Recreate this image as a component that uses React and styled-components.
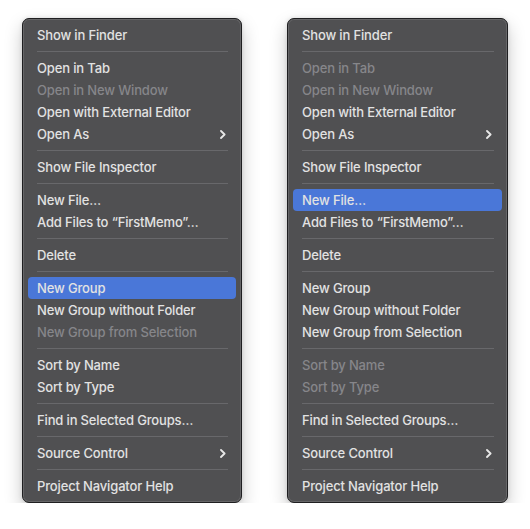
import React from "react";
import styled, { createGlobalStyle } from "styled-components";

const GlobalStyle = createGlobalStyle`
  body {
    margin: 0;
    background: #ffffff;
  }
`;

const Page = styled.div`
  display: flex;
  gap: 45px;
  padding: 18px 0 0 22px;
  font-family: Inter, "Liberation Sans", sans-serif;
`;

const Menu = styled.div`
  box-sizing: border-box;
  width: ${(p) => p.width}px;
  padding: 5px;
  background: #505052;
  border: 1px solid #1f1f21;
  border-radius: 7px;
  box-shadow: inset 0 0 0 1px rgba(255, 255, 255, 0.13),
    0 8px 18px rgba(0, 0, 0, 0.22), 0 0 4px rgba(0, 0, 0, 0.12);
`;

const Item = styled.div`
  display: flex;
  align-items: center;
  justify-content: space-between;
  height: 22px;
  padding: 0 10px 0 9px;
  border-radius: 4px;
  font-size: 13px;
  font-weight: 500;
  letter-spacing: -0.15px;
  color: ${(p) => (p.disabled ? "#86868a" : "#e2e2e2")};
  background: ${(p) => (p.selected ? "#4a77d8" : "transparent")};
  white-space: nowrap;
`;

const Separator = styled.div`
  height: 11px;
  display: flex;
  align-items: center;
  margin: 0 8px 0 9px;

  &::after {
    content: "";
    flex: 1;
    height: 1px;
    background: #68686b;
  }
`;

const Chevron = () => (
  <svg width="6" height="9" viewBox="0 0 6 9">
    <polyline
      points="1,1 4.6,4.5 1,8"
      fill="none"
      stroke="#e8e8e8"
      strokeWidth="1.8"
      strokeLinecap="round"
      strokeLinejoin="round"
    />
  </svg>
);

const buildMenu = (disabled, selected) => [
  ["Show in Finder"],
  "-",
  ["Open in Tab"],
  ["Open in New Window"],
  ["Open with External Editor"],
  ["Open As", true],
  "-",
  ["Show File Inspector"],
  "-",
  ["New File…"],
  ["Add Files to “FirstMemo”…"],
  "-",
  ["Delete"],
  "-",
  ["New Group"],
  ["New Group without Folder"],
  ["New Group from Selection"],
  "-",
  ["Sort by Name"],
  ["Sort by Type"],
  "-",
  ["Find in Selected Groups…"],
  "-",
  ["Source Control", true],
  "-",
  ["Project Navigator Help"],
].map((entry) =>
  entry === "-"
    ? entry
    : {
        label: entry[0],
        submenu: !!entry[1],
        disabled: disabled.includes(entry[0]),
        selected: entry[0] === selected,
      }
);

const menus = [
  {
    width: 220,
    items: buildMenu(["Open in New Window", "New Group from Selection"], "New Group"),
  },
  {
    width: 221,
    items: buildMenu(
      ["Open in Tab", "Open in New Window", "Sort by Name", "Sort by Type"],
      "New File…"
    ),
  },
];

export default function App() {
  return (
    <>
      <GlobalStyle />
      <Page>
        {menus.map((menu, i) => (
          <Menu key={i} width={menu.width}>
            {menu.items.map((item, j) =>
              item === "-" ? (
                <Separator key={j} />
              ) : (
                <Item key={j} disabled={item.disabled} selected={item.selected}>
                  <span>{item.label}</span>
                  {item.submenu && <Chevron />}
                </Item>
              )
            )}
          </Menu>
        ))}
      </Page>
    </>
  );
}
